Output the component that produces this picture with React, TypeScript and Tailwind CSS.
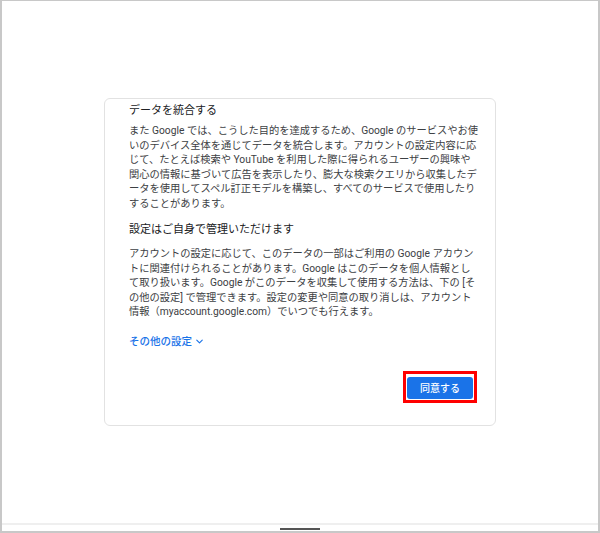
import React from 'react';
import { ChevronDown } from 'lucide-react';

const font = { fontFamily: 'Roboto, "Noto Sans CJK JP", sans-serif' };

const combineLines = [
  'また Google では、こうした目的を達成するため、Google のサービスやお使',
  'いのデバイス全体を通じてデータを統合します。アカウントの設定内容に応',
  'じて、たとえば検索や YouTube を利用した際に得られるユーザーの興味や',
  '関心の情報に基づいて広告を表示したり、膨大な検索クエリから収集したデ',
  'ータを使用してスペル訂正モデルを構築し、すべてのサービスで使用したり',
  'することがあります。',
];

const manageLines = [
  'アカウントの設定に応じて、このデータの一部はご利用の Google アカウン',
  'トに関連付けられることがあります。Google はこのデータを個人情報とし',
  'て取り扱います。Google がこのデータを収集して使用する方法は、下の [そ',
  'の他の設定] で管理できます。設定の変更や同意の取り消しは、アカウント',
  '情報（myaccount.google.com）でいつでも行えます。',
];

function Paragraph({ lines, className }: { lines: string[]; className?: string }) {
  return (
    <p className={`text-[10.25px] leading-[14.5px] text-[#3c4043] ${className ?? ''}`}>
      {lines.map((line) => (
        <span key={line} className="block whitespace-nowrap">
          {line}
        </span>
      ))}
    </p>
  );
}

export default function App() {
  return (
    <div
      className="w-[600px] h-[533px] flex flex-col bg-white border-x-2 border-t border-b-2 border-[#c8c8c8] overflow-hidden"
      style={font}
    >
      {/* Main content */}
      <div className="flex-1 pt-[97px]">
        <div className="mx-auto w-[392px] h-[328px] rounded-md border border-[#e2e2e2] pl-6 pr-[14px] pt-[4px] flex flex-col">
          <h2 className="text-[11px] leading-[15px] text-[#202124]">データを統合する</h2>
          <Paragraph lines={combineLines} className="mt-[6px]" />
          <h2 className="mt-[11px] text-[11px] leading-[15px] text-[#202124]">設定はご自身で管理いただけます</h2>
          <Paragraph lines={manageLines} className="mt-[10px]" />
          <button className="mt-[14px] self-start flex items-center gap-[2px] text-[10.5px] leading-[15px] text-[#1a73e8] font-medium">
            その他の設定
            <ChevronDown size={11} strokeWidth={2.5} />
          </button>
          <div className="mt-[22px] flex justify-end">
            <div className="mr-[4px] border-[3px] border-[#ff0000] p-px">
              <button className="w-[66px] h-[22px] rounded-[3px] bg-[#1a73e8] text-white text-[10px] font-medium">
                同意する
              </button>
            </div>
          </div>
        </div>
      </div>

      {/* Bottom navigation */}
      <div className="h-[2px] bg-[#efefef]" />
      <div className="h-[6px] flex justify-center">
        <div className="mt-[3px] w-[40px] h-[2px] bg-[#555555]" />
      </div>
    </div>
  );
}
